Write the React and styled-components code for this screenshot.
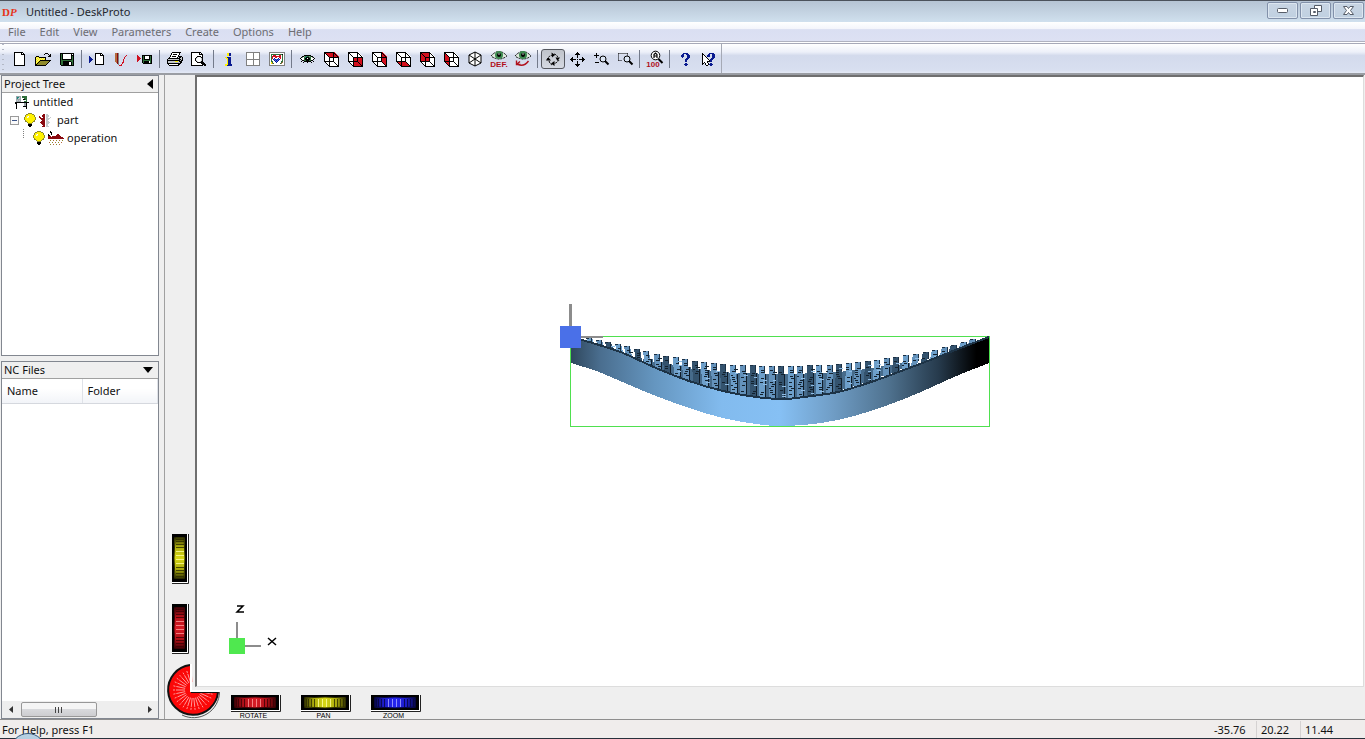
import React from "react";
import styled, { createGlobalStyle } from "styled-components";

const Global = createGlobalStyle`
  * { box-sizing: border-box; }
  body {
    margin: 0;
    background: #efefef;
    color: #111;
    font: 11px/18px "Noto Sans", "Open Sans", sans-serif;
  }
  button, a { font: inherit; color: inherit; }
  button { border: 0; padding: 0; background: none; }
  svg { display: block; overflow: visible; }
`;

/* ---------- pixel icons ---------- */

const palette = {
  k: "#000000", w: "#ffffff", r: "#d01020", m: "#8a0a10", y: "#fff200", b: "#0a1a90",
  o: "#8f8a2c", l: "#f5ec8a", g: "#2f6f3a", G: "#7d9a7d", a: "#808080", c: "#c4c8cc",
  t: "#1d8a80", n: "#b46a3c", p: "#4a6af0", e: "#9aa4a8",
};

function Pixels({ rows }) {
  const width = Math.max(...rows.map((row) => row.length));
  const runs = [];
  rows.forEach((row, y) => {
    let x = 0;
    while (x < row.length) {
      let end = x + 1;
      while (row[end] === row[x]) end += 1;
      if (palette[row[x]]) runs.push({ x, y, width: end - x, fill: palette[row[x]] });
      x = end;
    }
  });
  return (
    <svg width={width} height={rows.length} shapeRendering="crispEdges" aria-hidden="true">
      {runs.map((run) => <rect key={`${run.x}-${run.y}`} height="1" {...run} />)}
    </svg>
  );
}

const art = {
  New: [
    "kkkkkkkkk..", "kwwwwwwkwk.", "kwwwwwwkkkk", "kwwwwwwwwwk", "kwwwwwwwwwk", "kwwwwwwwwwk", "kwwwwwwwwwk",
    "kwwwwwwwwwk", "kwwwwwwwwwk", "kwwwwwwwwwk", "kwwwwwwwwwk", "kwwwwwwwwwk", "kwwwwwwwwwk", "kkkkkkkkkkk",
  ],
  Open: [
    "..........kkk...", ".........k...k.k", "..............kk", ".kkk.........kkk", "kylykkkkkkk.....", "klylylylylk.....",
    "kylylylylyk.....", "klylykkkkkkkkkkk", "kylykoooooooook.", "klykoooooooook..", "kykoooooooook...", "kkoooooooook....", "kkkkkkkkkkk.....",
  ],
  Save: [
    "kkkkkkkkkkkkkk", "kgkwwwwwwwwkwk", "kgkwwwwwwwwkkk", "kgkwwwwwwwwkgk", "kgkwwwwwwwwkgk", "kgkwwwwwwwwkgk", "kgkkkkkkkkkkgk",
    "kggggggggggggk", "kggkkkkkkkkggk", "kggkkkkkkwwkgk", "kggkkkkkkwwkgk", "kggkkkkkkwwkgk", ".kkkkkkkkkkkkk",
  ],
  LoadPart: [
    "......kkkkkkk...", "......kwwwwkwk..", "......kwwwwkkkk.", "b.....kwwwwwwwk.", "bb....kwwwwwwwk.", "bbb...kwwwwwwwk.", "bbbb..kwwwwwwwk.",
    "bbb...kwwwwwwwk.", "bb....kwwwwwwwk.", "b.....kwwwwwwwk.", "......kwwwwwwwk.", "......kkkkkkkkk.",
  ],
  Toolpath: [
    "nnma........", "nnma........", "nnma.......r", "nnma......r.", "nnma.....r..", "nnma.....r..", "nnma....r...",
    "nnma....r...", "nnma....r...", ".nma...rr...", "..ma...r....", "...a..r.....", "....rrr.....",
  ],
  WriteNc: [
    "r....kkkkkkkkkk.", "rr...kgkwwwwkgk.", "rrr..kgkwwwwkgk.", "rrrr.kgkwwwwkgk.", "rrr..kgkkkkkkgk.", "rr...kggggggggk.",
    "r....kgkkkkkwgk.", ".....kgkkkkkwgk.", "......kkkkkkkkk.",
  ],
  Print: [
    ".....kkkkkkkkk..", "....kwwwwwwwk...", "....kwkkkkwwk...", "...kwwwwwwwk....", "...kwkkkkwwkkkk.", "..kwwwwwwwk.kkck", ".kkkkkkkkkkkkcck",
    "kccccccccccckkck", "kkkkkkkkkkkkkckk", "kcccccccyyyckkk.", "kcccccccccccckk.", "kkkkkkkkkkkkkk..", ".kwwwwwwwwwkk...", "..kkkkkkkkkk....",
  ],
  Preview: [
    "kkkkkkkkkk......", "kwwwwwwwkwk.....", "kwwwwwwwkkkk....", "kwwwwwwwwwwk....", "kwwwwwkkkkwk....", "kwwwwkcwwckk....", "kwwwkcwwwwck....",
    "kwwwkwwwwwck....", "kwwwkcwwwwck....", "kwwwwkcwwckk....", "kwwwwwkkkkkkk...", "kwwwwwwwwwkkkk..", "kwwwwwwwwwwkkkk.", "kkkkkkkkkkkk.kk.",
  ],
  Info: [
    "..yybb..", "..yybb..", "..yybb..", "........", "yybbbb..", ".yybbb..", "..ybbb..", "..ybbb..", "..ybbb..", "..ybbb..", "..ybbb..", "yyybbbb.", "yybbbbb.",
  ],
  Grid: [
    "aaaaaaaaaaaaaa", "awwwwwwawwwwwa", "awwwwwwawwwwwa", "awwwwwwawwwwwa", "awwwwwwawwwwwa", "awwwwwwawwwwwa", "awwwwwwawwwwwa",
    "aaaaaaaaaaaaaa", "awwwwwwawwwwwa", "awwwwwwawwwwwa", "awwwwwwawwwwwa", "awwwwwwawwwwwa", "awwwwwwawwwwwa", "aaaaaaaaaaaaaa",
  ],
  View: [
    "aaaaaaaaaaaaaaaa", "awwwwwwwwwwwwwwa", "awgggggggggggkwa", "awgwrrrwwwrrwgwa", "awgrrrrrrrrrwgwa", "awgrwwrrwwrrwgwa", "awgrwbwwwbwrwgwa",
    "awgwbpbpbpbwwgwa", "awgwwbpbpbwwwgwa", "awggwwbpbwwwggwa", "awygwwwbwwwwgnwa", "awyngwwwwwwgnwwa", "awwwwwwwwwwwwwwa", "aaaaaaaaaaaaaaaa",
  ],
  Eye: [
    "....kkkkkkk....", "..kkGgtggGgkk..", ".kGwgtkkkggwGk.", "kwwwgkkwkkgwwwk", ".kwwgkkkkkgwwk.", "..kkggkkkggkk..", ".k..kkkkkkk..k.", "...k...k...k...",
  ],
  Help: [
    "..bbbbb..", ".bb..bbb.", "bbb...bbb", "bbb...bbb", ".b....bbb", ".....bbb.", "....bbb..", "....bb...", "....bb...", ".........", "....bb...", "...bbbb..", "....bb...",
  ],
  ContextHelp: [
    "k......bbbbb..", "kk....bb..bbb.", "kwk..bbb..bbb.", "kwwk.bbb..bbb.", "kwwwk.....bbb.", "kwwwwk...bbb..", "kwwwwwk.bbb...", "kwwwwwwkbb....",
    "kwwwwkkkbb....", "kwkwwk........", "kk.kwwk.bb....", "k..kwwkbbbb...", "....kk..bb....",
  ],
  Machine: [
    ".eeeee.ggggg...", ".ettce.ggggg...", ".etcce...ggg...", ".eeeee..kkgg...", ".ecece.....g...", ".eeeee...ggg...", "kkkkkkkkkkkkkk.", "kk.......eek...",
    ".k.......eek...", ".k.......eek...", ".k......kkkk...", ".k.........k...", ".k.........k...",
  ],
  Bulb: [
    "....oooo....", "..ooyyyyoo..", ".oyyyyyyyyo.", ".oylwyyyyyo.", "oyywlyyyyyyo", "oyyyyyyyyyyo", "oyyyyyyyyyyo", ".oyyyyyyyyo.",
    ".ooyyyyyyoo.", "...oyyyyo...", "....oooo....", "....kkkk....", "....kkkk....", ".....kk.....",
  ],
  Part: [
    "....mm.cc...", "...mmm.ccc..", "m..mmm.ccc..", "mm..mm.cc..c", ".mmmmm.cccc.", "..mmmm.ccc..", "...mmm.cc...", "..mmmm.ccc..",
    ".mmmmm.cccc.", "..mmmm.ccc..", "...mmm.cc...", "....mm.cc...", "...mmm.ccc..",
  ],
  Operation: [
    "..k.............", "..kk............", "...k............", "k..k.....mm.....", "kk......mmmm....", "mmm.mmmmmmmmm...", "mmmmmmmmmmmmmmm.", "mmmmmmmmmmmmmmmm",
    "................", "..o..n..o..n..o.", "................", ".n..o..n..o..n..", "................", "..o..n..o..n....",
  ],
};

const cubeFaces = {
  top: "M0 0H10L15 5H5Z",
  front: "M5 5H15V15H5Z",
  right: "M10 0L15 5V15L10 10Z",
  bottom: "M0 10H10L15 15H5Z",
  back: "M0 0H10V10H0Z",
  left: "M0 0L5 5V15L0 10Z",
};

function Cube({ face }) {
  return (
    <svg width="15" height="15" viewBox="0 0 15 15" shapeRendering="crispEdges" aria-hidden="true">
      <path d="M0 0H10L15 5V15H5L0 10Z" fill="#fff" />
      <path d={cubeFaces[face]} fill="#d40f1d" />
      <path d="M.5 .5H9.5V9.5H.5ZM5.5 5.5H14.5V14.5H5.5ZM.5 .5L5.5 5.5M9.5 .5L14.5 5.5M9.5 9.5L14.5 14.5M.5 9.5L5.5 14.5" fill="none" stroke="#000" />
    </svg>
  );
}

const IsoCube = () => (
  <svg width="14" height="16" viewBox="0 0 14 16" aria-hidden="true">
    <path d="M7 1L13 4V12L7 15L1 12V4Z" fill="#fff" stroke="#000" />
    <path d="M7 1V15M1 4L13 12M13 4L1 12" stroke="#000" />
  </svg>
);

const EyeTag = ({ back }) => (
  <svg width="16" height="16" viewBox="0 0 16 16" aria-hidden="true">
    <path d="M0 5Q8-4 16 5Q8 11 0 5Z" fill="#dfe9df" stroke="#000" strokeDasharray="2 1" />
    <circle cx="8" cy="4" r="4" fill="#3d8a50" />
    <circle cx="8" cy="4" r="2" fill="#000" />
    <circle cx="8" cy="3" r=".7" fill="#fff" />
    {back
      ? <path d="M1.5 9.5V13.5H5.5M2 13L5 10.5M3 13.5Q9 16 13.5 10" fill="none" stroke="#b0101c" strokeWidth="1.4" />
      : <text x="8" y="16" fontSize="8" fontWeight="bold" textAnchor="middle" fill="#b0101c" fontFamily="Liberation Sans, sans-serif">DEF.</text>}
  </svg>
);

const RotateIcon = () => (
  <svg width="16" height="16" viewBox="0 0 16 16" aria-hidden="true">
    <path d="M2 9Q3 5 8 4M9 3Q13 4 13 8M14 9Q12 12 8 13M7 14Q4 12 4 9" fill="none" stroke="#000" strokeDasharray="2 1" />
    <path d="M6.500 1.500L10 4L7 6.500ZM10.500 6.500H15L12.500 10ZM9.500 10L9.500 15L6 12.500ZM1 9.500L6 9.500L3.500 6.500Z" />
  </svg>
);

const PanIcon = () => (
  <svg width="15" height="15" viewBox="0 0 15 15" shapeRendering="crispEdges" aria-hidden="true">
    <path d="M7.5 2V6M7.5 9V13M2 7.5H6M9 7.5H13M7 7.5H8" stroke="#000" />
    <path d="M7.5 0L10 3H5ZM7.5 15L10 12H5ZM0 7.5L3 5V10ZM15 7.5L12 5V10Z" />
  </svg>
);

const ZoomIcon = ({ area }) => (
  <svg width="15" height="15" viewBox="0 0 15 15" aria-hidden="true">
    {area
      ? <path d="M.5 1.5H9.5M.5 1.5V8.5M.5 8.5H4M9.5 1.5V4" fill="none" stroke="#000" strokeDasharray="1 1" />
      : <path d="M2.5 1V6M0 3.5H5M1 10.5H5" stroke="#000" fill="none" />}
    <circle cx="9" cy="7" r="3" fill="#dce6f5" stroke="#000" />
    <path d="M11 9L14.5 12.5" stroke="#000" strokeWidth="2" />
  </svg>
);

const Zoom100 = () => (
  <svg width="16" height="16" viewBox="0 0 16 16" aria-hidden="true">
    <circle cx="8.500" cy="4.500" r="4.300" fill="#fff" stroke="#000" />
    <path d="M11.500 8L15.500 12" stroke="#000" strokeWidth="2" />
    <path d="M7 7V3.500L8.500 2L10 3.500V7M7 5H10" fill="none" stroke="#000" strokeWidth="1.200" />
    <text x="6" y="16" fontSize="8" fontWeight="bold" textAnchor="middle" fill="#b0101c" fontFamily="Liberation Sans, sans-serif">100</text>
  </svg>
);

/* ---------- window frame ---------- */

const Window = styled.div`
  display: flex;
  flex-direction: column;
  height: 100vh;
  min-height: 480px;
  overflow: hidden;
`;

const TitleBar = styled.header`
  display: flex;
  align-items: center;
  height: 22px;
  flex: none;
  padding: 0 1px 0 2px;
  gap: 7px;
  border-top: 1px solid #4c525c;
  background: linear-gradient(#b6c4d4, #d0e0ee);
  color: #23272e;
`;

const Logo = styled.span`
  color: #e63419;
  font: bold 11px/18px "Liberation Serif", serif;
  width: 17px;
`;

const Title = styled.h1`
  flex: 1;
  margin: 0;
  font: 11px/18px "Noto Sans", sans-serif;
`;

const FrameButtons = styled.div`
  display: flex;
  align-self: flex-start;
  gap: 2px;
  padding-top: 1px;
`;

const FrameButton = styled.button`
  display: grid;
  place-items: center;
  width: 31px;
  height: 17px;
  border: 1px solid #8291aa;
  border-radius: 2px;
  background: linear-gradient(#c8d5e3, #c0d0e1);
  box-shadow: inset 0 0 0 1px #dce6f0;
`;

const MenuBar = styled.nav`
  display: flex;
  align-items: center;
  gap: 14px;
  height: 20px;
  flex: none;
  padding: 0 8px;
  background: linear-gradient(#fff, #f4f5fb 35%, #dadff2 40%, #dde1f3);
  border-bottom: 1px solid #b0b2c0;
  color: #6d6d72;
`;

const MenuItem = styled.a`
  text-decoration: none;
`;

const ToolBar = styled.div`
  display: flex;
  height: 33px;
  flex: none;
  border-top: 1px solid #fff;
  border-bottom: 2px solid #9a9da3;
  background: linear-gradient(#a7a9b8 1px, #fff 1px, #edf0f9 30%, #d3daec 42%, #d8dff0 90%, #e4e9f5);
`;

const ToolSet = styled.div`
  display: flex;
  align-items: center;
  padding: 3px 0 1px 7px;
  border-right: 1px solid #a5a9b5;
  background: radial-gradient(circle, #b3b8c5 1px, transparent 1px) 1px 4px / 4px 5px repeat-y;
`;

const Tool = styled.button`
  display: grid;
  place-items: center;
  width: 24px;
  height: 20px;
  border: 1px solid ${(p) => (p.$active ? "#55585f" : "transparent")};
  border-radius: 3px;
  background: ${(p) => (p.$active ? "linear-gradient(#bfc3ca, #d5d9e2)" : "none")};
`;

const Divider = styled.span`
  width: 1px;
  height: 18px;
  margin: 0 3px 0 2px;
  background: #737a8a;
`;

/* ---------- side panels ---------- */

const Body = styled.div`
  display: flex;
  flex: 1;
  min-height: 0;
`;

const Side = styled.aside`
  display: flex;
  flex-direction: column;
  gap: 5px;
  width: 165px;
  padding: 0 5px 0 1px;
  border-right: 1px solid #a0a0a0;
`;

const Panel = styled.section`
  display: flex;
  flex-direction: column;
  flex: ${(p) => p.$grow} 1 0;
  min-height: 0;
  border: 1px solid #828790;
  background: #fff;
`;

const PanelHead = styled.div`
  display: flex;
  align-items: center;
  justify-content: space-between;
  height: 17px;
  flex: none;
  padding: 0 5px 0 2px;
  background: #efefef;
  border-bottom: 1px solid #a0a0a0;
`;

const PanelTitle = styled.h2`
  margin: 0;
  font: 11px/16px "Noto Sans", sans-serif;
`;

const Tree = styled.ul`
  margin: 0;
  padding: 0;
  list-style: none;
`;

const TreeRow = styled.li`
  display: flex;
  align-items: center;
  gap: 3px;
  height: 18px;
  padding-left: ${(p) => p.$indent}px;
`;

const TreeLabel = styled.span`
  padding-left: 3px;
`;

const Twisty = styled.button`
  display: grid;
  place-items: center;
  width: 9px;
  height: 9px;
  margin-right: 2px;
  border: 1px solid #9a9a9a;
  background: #fafafa;
`;

const Stem = styled.span`
  width: 1px;
  height: 9px;
  margin-right: 6px;
  align-self: flex-start;
  border-left: 1px dotted #808080;
`;

const FileTable = styled.table`
  border-collapse: collapse;
  table-layout: fixed;
  width: 100%;
`;

const ColumnHead = styled.th`
  width: ${(p) => p.$width};
  height: 24px;
  padding: 1px 5px 0;
  text-align: left;
  font-weight: normal;
  background: linear-gradient(#fff 40%, #f2f4f8);
  border-right: 1px solid #dfe2e8;
  border-bottom: 1px solid #d5d8de;
`;

const Scroll = styled.div`
  display: flex;
  align-items: center;
  height: 17px;
  margin-top: auto;
  background: #eeeeee;
`;

const ScrollArrow = styled.button`
  display: grid;
  place-items: center;
  width: 17px;
  height: 17px;
`;

const Track = styled.div`
  flex: 1;
  padding: 0 2px;
`;

const Thumb = styled.div`
  display: grid;
  place-items: center;
  width: 64%;
  height: 15px;
  border: 1px solid #989898;
  border-radius: 2px;
  background: linear-gradient(#f5f5f5 45%, #d8d9dc 50%, #cdcdd0);
`;

/* ---------- work area ---------- */

const Work = styled.main`
  position: relative;
  display: grid;
  grid-template: minmax(0, 1fr) 32px / 30px minmax(0, 1fr);
  flex: 1;
  min-width: 0;
`;

const LeftRail = styled.div`
  display: flex;
  flex-direction: column;
  align-items: flex-end;
  justify-content: flex-end;
  gap: 21px;
  padding: 0 7px 34px 0;
`;

const Viewport = styled.div`
  position: relative;
  display: grid;
  place-items: center;
  margin-right: 1px;
  border: solid #6f6f6f;
  border-width: 2px 1px 1px 2px;
  border-right-color: #ddd;
  border-bottom-color: #ddd;
  background: #fff;
`;

const AxisCorner = styled.div`
  position: absolute;
  left: 32px;
  bottom: 32px;
`;

const BottomRail = styled.div`
  grid-column: 2;
  display: flex;
  gap: 21px;
  padding: 8px 0 0 36px;
`;

const WheelButton = styled.button`
  display: grid;
  justify-items: center;
  align-content: start;
  gap: 1px;
`;

const WheelLabel = styled.span`
  padding-right: 4px;
  font: 7px/8px "Liberation Sans", sans-serif;
  color: #000;
`;

const DialButton = styled.button`
  position: absolute;
  left: 3px;
  bottom: 1px;
`;

const wheelTones = {
  red: ["#3a0206", "#b01018", "#ff9a9a", "#d81c26"],
  yellow: ["#2c2c00", "#a8a80c", "#ffffa0", "#d8d814"],
  blue: ["#06063c", "#1c1cc8", "#a8a8ff", "#2424f0"],
};

function Wheel({ tone, vertical }) {
  const [dark, mid, light, body] = wheelTones[tone];
  const id = `wheel-${tone}-${vertical ? "v" : "h"}`;
  const ribs = [5, 7, 10, 13, 17, 21, 25, 29, 33, 36, 39, 42, 44];
  const drawing = (
    <>
      <rect width="49" height="16" fill="#fff" />
      <rect width="48" height="15" fill="#000" />
      <rect x="3" y="2" width="42" height="11" rx="2" fill={`url(#${id})`} />
      <path d="M3 3Q24 1 45 3M3 12Q24 14 45 12" fill="none" stroke={dark} />
      {ribs.map((x) => <path key={x} d={`M${x}.5 4V12`} stroke={x > 15 && x < 32 ? light : dark} opacity="0.8" />)}
      <path d="M0 16.5H49.500V0" fill="none" stroke="#222" />
    </>
  );
  return (
    <svg width={vertical ? 16 : 49} height={vertical ? 49 : 16} aria-hidden="true">
      <defs>
        <linearGradient id={id}>
          <stop offset="0" stopColor={dark} />
          <stop offset=".22" stopColor={mid} />
          <stop offset=".5" stopColor={body} />
          <stop offset=".78" stopColor={mid} />
          <stop offset="1" stopColor={dark} />
        </linearGradient>
      </defs>
      {vertical ? <g transform="matrix(0 1 1 0 0 0)">{drawing}</g> : drawing}
    </svg>
  );
}

function Dial() {
  const rays = [];
  for (let angle = 12; angle < 270; angle += 12) {
    const rad = (angle * Math.PI) / 180;
    const cos = Math.cos(rad);
    const sin = Math.sin(rad);
    rays.push(<path key={angle} d={`M${25 + 8 * cos} ${26 + 8 * sin}L${25 + 22 * cos} ${26 + 22 * sin}`} />);
  }
  return (
    <svg width="52" height="54" viewBox="0 0 52 54" aria-hidden="true">
      <path d="M51.5 28A26 26 0 0 1 14 51" fill="none" stroke="#555" />
      <path d="M22 1A25 25 0 1 0 50 28H22Z" fill="#fb0808" />
      <g stroke="#ff9a9a" strokeDasharray="9 1 2 2">{rays}</g>
      <path d="M22 1A25 25 0 1 0 50 28" fill="none" stroke="#111" strokeWidth="2" />
      <path d="M23 0V27H52" fill="none" stroke="#fff" strokeWidth="2" />
      <path d="M23 28.5H50" stroke="#111" />
    </svg>
  );
}

/* Part drawing: coordinates are relative to the bounding box corner. */
const ridge = [[0, 1], [11, 4], [28, 9], [52, 17], [85, 32], [118, 45], [152, 55], [185, 61], [212, 63], [233, 61], [267, 56], [300, 46], [333, 34], [367, 21], [387, 13], [418, 1]];
const base = [[418, 27], [383, 41], [350, 56], [317, 69], [283, 80], [250, 87], [212, 90], [185, 88], [152, 82], [118, 72], [85, 60], [56, 48], [28, 36], [0, 27]];
const tips = [[0, 2], [20, 2], [50, 9], [88, 19], [107, 22], [125, 25], [145, 27], [163, 29], [210, 30], [256, 29], [275, 27], [294, 25], [313, 22], [332, 19], [350, 16], [370, 11], [400, 2], [418, 0]];

function heightAt(points, x) {
  const next = points.findIndex(([px]) => px >= x);
  if (next <= 0) return points[0][1];
  const [x0, y0] = points[next - 1];
  const [x1, y1] = points[next];
  return y0 + ((y1 - y0) * (x - x0)) / (x1 - x0);
}

/* Catmull-Rom spline through the points, as cubic segments. */
function smooth(points) {
  return points.slice(1).map(([x, y], i) => {
    const before = points[i - 1] || points[i];
    const from = points[i];
    const after = points[i + 2] || [x, y];
    const c1 = [from[0] + (x - before[0]) / 6, from[1] + (y - before[1]) / 6];
    const c2 = [x - (after[0] - from[0]) / 6, y - (after[1] - from[1]) / 6];
    return `C${c1} ${c2} ${x},${y}`;
  }).join("");
}

const noise = (n) => Math.abs(Math.sin(n * 127.1) * 43758.5) % 1;

function Teeth() {
  const parts = [];
  for (let i = 0; i < 41; i += 1) {
    const x = Math.round(17 + i * 9.5);
    const top = Math.round(heightAt(tips, x));
    const bottom = Math.round(heightAt(ridge, x + 4));
    const lean = Math.round((i - 20) / 9);
    const shade = i % 3 === 2 ? "#34536e" : i % 3 === 1 ? "#6492bb" : "#6d9fca";
    if (bottom - top > 13) {
      parts.push(<rect key={`b${i}`} x={x - 2} y={top + 8} width="10" height={bottom - top - 8} fill="#466b8b" />);
      parts.push(<rect key={`g${i}`} x={x + 6} y={top + 8} width="1" height={bottom - top - 8} fill="#101c28" />);
    }
    parts.push(<path key={`t${i}`} d={`M${x + lean} ${top}h6l${-lean} ${bottom - top}h-6Z`} fill={shade} />);
    parts.push(<path key={`e${i}`} d={`M${x + lean} ${top + 0.5}h3M${x + 5.5 + lean} ${top}v${Math.min(7, bottom - top)}`} stroke="#1c3044" fill="none" />);
    for (let y = top + 4; y < bottom - 2; y += 2) {
      const n = noise(i * 37 + y);
      if (n > 0.3) {
        parts.push(<rect key={`n${i}-${y}`} x={x - 1 + Math.floor(n * 6)} y={y} width={2 + Math.floor(n * 3)} height="1" fill={n > 0.85 ? "#8fbce4" : "#13222f"} />);
      }
    }
  }
  return <g>{parts}</g>;
}

const PartModel = () => (
  <svg width="419" height="92" shapeRendering="crispEdges" role="img" aria-label="Part geometry">
    <defs>
      <linearGradient id="steel">
        <stop offset="0" stopColor="#2f475d" />
        <stop offset=".07" stopColor="#4a6e8f" />
        <stop offset=".2" stopColor="#6596c0" />
        <stop offset=".36" stopColor="#82bbee" />
        <stop offset=".5" stopColor="#86c0f4" />
        <stop offset=".62" stopColor="#719fc8" />
        <stop offset=".76" stopColor="#4f728f" />
        <stop offset=".88" stopColor="#263a4c" />
        <stop offset=".97" stopColor="#000" />
      </linearGradient>
    </defs>
    <path d="M-.5 .5H418.5V90.5H-.5Z" fill="none" stroke="#4fe04f" />
    <Teeth />
    <path d={`M${ridge[0]}${smooth(ridge)}L${base[0]}${smooth(base)}Z`} fill="url(#steel)" />
    <path d={`M${ridge[0]}${smooth(ridge)}`} fill="none" stroke="#1d3346" strokeWidth="2" />
    <rect x="-2" y="-32" width="3" height="24" fill="#8c8c8c" />
    <rect x="8" y="0" width="24" height="2" fill="#8c8c8c" />
    <rect x="-11" y="-10" width="21" height="22" fill="#4a70e8" />
  </svg>
);

const AxisMark = () => (
  <svg width="56" height="52" role="img" aria-label="View axes">
    <path d="M8 20V38M16 44H32" stroke="#8c8c8c" strokeWidth="2" />
    <rect x="0" y="36" width="16" height="16" fill="#4fe84f" />
    <g fill="none" stroke="#000" strokeWidth="1.5">
      <path d="M8 4H14L8 10H15M39 36L47 43M47 36L39 43" />
    </g>
  </svg>
);

/* ---------- status bar ---------- */

const StatusBar = styled.footer`
  display: flex;
  align-items: center;
  height: 19px;
  flex: none;
  padding: 1px 3px 0 2px;
  border-top: 1px solid #8e8e8e;
  background: #f0edec;
`;

const StatusText = styled.span`
  flex: 1;
`;

const Coordinate = styled.span`
  width: ${(p) => p.$width}px;
  padding-left: 4px;
  border-left: 1px solid ${(p) => (p.$first ? "transparent" : "#d5d2d2")};
`;

const TaskbarEdge = styled.div`
  position: relative;
  height: 1px;
  flex: none;
  background: #27303b;
`;

const StartOrb = styled.span`
  position: absolute;
  left: 10px;
  bottom: -30px;
  width: 36px;
  height: 36px;
  border: 1px solid #31567c;
  border-radius: 50%;
  background: linear-gradient(#b9d2e4, #8fb6d2);
`;

const pixelIcon = (name) => <Pixels rows={art[name]} />;

const toolGroups = [
  [["New", pixelIcon("New")], ["Open", pixelIcon("Open")], ["Save", pixelIcon("Save")]],
  [["Load part", pixelIcon("LoadPart")], ["Calculate toolpaths", pixelIcon("Toolpath")], ["Write NC file", pixelIcon("WriteNc")]],
  [["Print", pixelIcon("Print")], ["Print preview", pixelIcon("Preview")]],
  [["Information", pixelIcon("Info")], ["Layout", pixelIcon("Grid")], ["View settings", pixelIcon("View")]],
  [
    ["View", pixelIcon("Eye")],
    ...Object.keys(cubeFaces).map((face) => [`View ${face}`, <Cube face={face} />]),
    ["Isometric view", <IsoCube />], ["Default view", <EyeTag />], ["Previous view", <EyeTag back />],
  ],
  [["Rotate", <RotateIcon />, true], ["Pan", <PanIcon />], ["Zoom", <ZoomIcon />], ["Zoom window", <ZoomIcon area />]],
  [["Zoom all", <Zoom100 />]],
  [["Help", pixelIcon("Help")], ["Context help", pixelIcon("ContextHelp")]],
];

const menus = ["File", "Edit", "View", "Parameters", "Create", "Options", "Help"];

export default function App() {
  return (
    <Window>
      <Global />
      <TitleBar>
        <Logo>D<i>P</i></Logo>
        <Title>Untitled - DeskProto</Title>
        <FrameButtons>
          <FrameButton aria-label="Minimize">
            <svg width="11" height="5"><rect x=".5" y=".5" width="10" height="4" rx="1" fill="#fff" stroke="#565d68" /></svg>
          </FrameButton>
          <FrameButton aria-label="Restore">
            <svg width="12" height="11">
              <g fill="#fff" stroke="#565d68"><path d="M4.5 .5H11.5V6.5H4.5Z" /><path d="M.5 3.5H7.5V10.5H.5Z" /><path d="M3.5 6.5H5.5V7.5H3.5Z" /></g>
            </svg>
          </FrameButton>
          <FrameButton aria-label="Close">
            <svg width="11" height="9">
              <path d="M.5 .5H4L5.5 2.5L7 .5H10.5L7.5 4.5L10.5 8.5H7L5.5 6.5L4 8.5H.5L3.5 4.5Z" fill="#fff" stroke="#565d68" />
            </svg>
          </FrameButton>
        </FrameButtons>
      </TitleBar>

      <MenuBar>
        {menus.map((name) => <MenuItem key={name} href="#">{name}</MenuItem>)}
      </MenuBar>

      <ToolBar>
        <ToolSet>
          {toolGroups.map((group, index) => (
            <React.Fragment key={group[0][0]}>
              {index > 0 && <Divider />}
              {group.map(([name, icon, active]) => (
                <Tool key={name} aria-label={name} $active={active}>{icon}</Tool>
              ))}
            </React.Fragment>
          ))}
        </ToolSet>
      </ToolBar>

      <Body>
        <Side>
          <Panel $grow={281}>
            <PanelHead>
              <PanelTitle>Project Tree</PanelTitle>
              <button aria-label="Collapse project tree">
                <svg width="6" height="10"><path d="M6 0V10L0 5Z" /></svg>
              </button>
            </PanelHead>
            <Tree>
              <TreeRow $indent={13}>{pixelIcon("Machine")}<span>untitled</span></TreeRow>
              <TreeRow $indent={8}>
                <Twisty aria-label="Collapse part">
                  <svg width="5" height="1"><rect width="5" height="1" fill="#3b5488" /></svg>
                </Twisty>
                {pixelIcon("Bulb")}{pixelIcon("Part")}<TreeLabel>part</TreeLabel>
              </TreeRow>
              <TreeRow $indent={21}>
                <Stem />{pixelIcon("Bulb")}{pixelIcon("Operation")}<span>operation</span>
              </TreeRow>
            </Tree>
          </Panel>

          <Panel $grow={358}>
            <PanelHead>
              <PanelTitle>NC Files</PanelTitle>
              <button aria-label="Collapse NC files">
                <svg width="10" height="6"><path d="M0 0H10L5 6Z" /></svg>
              </button>
            </PanelHead>
            <FileTable>
              <thead>
                <tr><ColumnHead $width="80px">Name</ColumnHead><ColumnHead>Folder</ColumnHead></tr>
              </thead>
            </FileTable>
            <Scroll>
              <ScrollArrow aria-label="Scroll left"><svg width="4" height="7"><path d="M4 0V7L0 3.5Z" fill="#333" /></svg></ScrollArrow>
              <Track>
                <Thumb><svg width="8" height="6" shapeRendering="crispEdges"><path d="M.5 0V6M3.5 0V6M6.5 0V6" stroke="#444" /></svg></Thumb>
              </Track>
              <ScrollArrow aria-label="Scroll right"><svg width="4" height="7"><path d="M0 0V7L4 3.5Z" fill="#333" /></svg></ScrollArrow>
            </Scroll>
          </Panel>
        </Side>

        <Work>
          <LeftRail>
            <WheelButton aria-label="Pan vertically"><Wheel tone="yellow" vertical /></WheelButton>
            <WheelButton aria-label="Rotate vertically"><Wheel tone="red" vertical /></WheelButton>
          </LeftRail>
          <Viewport>
            <PartModel />
            <AxisCorner><AxisMark /></AxisCorner>
          </Viewport>
          <BottomRail>
            <WheelButton><Wheel tone="red" /><WheelLabel>ROTATE</WheelLabel></WheelButton>
            <WheelButton><Wheel tone="yellow" /><WheelLabel>PAN</WheelLabel></WheelButton>
            <WheelButton><Wheel tone="blue" /><WheelLabel>ZOOM</WheelLabel></WheelButton>
          </BottomRail>
          <DialButton aria-label="Rotate around view axis"><Dial /></DialButton>
        </Work>
      </Body>

      <StatusBar>
        <StatusText>For Help, press F1</StatusText>
        <Coordinate $width={47} $first>-35.76</Coordinate>
        <Coordinate $width={44}>20.22</Coordinate>
        <Coordinate $width={62}>11.44</Coordinate>
      </StatusBar>
      <TaskbarEdge><StartOrb /></TaskbarEdge>
    </Window>
  );
}
